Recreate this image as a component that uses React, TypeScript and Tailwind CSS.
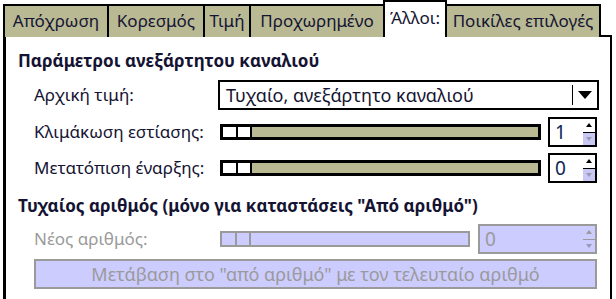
const tabs = [
  { label: "Απόχρωση", w: "w-[104px]" },
  { label: "Κορεσμός", w: "w-[96px]" },
  { label: "Τιμή", w: "w-[46px]" },
  { label: "Προχωρημένο", w: "w-[134px]" },
  { label: "Άλλοι:", w: "w-[64px]", active: true },
  { label: "Ποικίλες επιλογές", w: "w-[156px]", last: true },
];

const font = { fontFamily: '"Noto Sans", "DejaVu Sans", sans-serif' };

function Slider({ disabled, w }: { disabled?: boolean; w: string }) {
  const line = disabled ? "border-[#9a9a9a]" : "border-black";
  const bd = disabled ? "bg-[#9a9a9a]" : "bg-black";
  return (
    <div className={`flex h-[16px] ${w} ${disabled ? "border-2" : "border-[3px]"} ${line} ${disabled ? "bg-[#ccccff]" : "bg-[#b9b994]"}`}>
      <div className={`h-full w-[13px] ${disabled ? "bg-[#ccccff]" : "bg-white"}`} />
      <div className={`h-full w-[2px] ${bd}`} />
      <div className={`h-full w-[12px] ${disabled ? "bg-[#ccccff]" : "bg-white"}`} />
      <div className={`h-full w-[2px] ${bd}`} />
    </div>
  );
}

function Spin({ value, disabled, w }: { value: string; disabled?: boolean; w: string }) {
  return (
    <div
      className={`flex h-[30px] ${w} border-2 ${disabled ? "border-[#9a9a9a] bg-[#ccccff] text-[#9a9a9a]" : "border-black bg-white text-[#0b1f55]"}`}
    >
      <div className="flex flex-1 items-center pl-[5px] text-[19px] leading-none">{value}</div>
      <div className="flex w-[12px] flex-col">
        <div className="flex flex-1 items-center justify-center">
          <div
            className={`h-0 w-0 border-x-[3px] border-b-[4px] border-x-transparent ${disabled ? "border-b-[#9a9a9a]" : "border-b-black"}`}
          />
        </div>
        <div
          className={`flex flex-1 items-center justify-center border-t ${disabled ? "border-[#9a9a9a]" : "border-black bg-[#c8c8f2]"}`}
        >
          <div className="h-0 w-0 border-x-[3px] border-t-[4px] border-x-transparent border-t-[#9a9ab8]" />
        </div>
      </div>
    </div>
  );
}

export default function App() {
  return (
    <div className="h-[299px] w-[616px] overflow-hidden bg-white" style={font}>
      <div className="flex h-[37px] items-end pl-[3px]">
        {tabs.map((t) => (
          <div
            key={t.label}
            className={`flex items-center justify-center whitespace-nowrap border-l-2 border-t-2 border-black text-[17px] text-[#141432] ${t.w} ${
              t.active ? "relative z-10 h-[37px] border-r-2 bg-white" : "h-[33px] bg-[#b9b994]"
            } ${t.last ? "border-r-2" : ""} ${t.active ? "-mr-[2px] pb-[3px]" : "pb-[1px]"}`}
          >
            {t.label}
          </div>
        ))}
      </div>
      <div className="-mt-[2px] ml-[3px] h-[300px] w-[609px] border-2 border-l-[3px] border-black bg-white pl-[12px] pr-[10px] pt-[12px] text-[#141432]">
        <div className="flex h-[24px] items-center whitespace-nowrap text-[17px] font-bold">Παράμετροι ανεξάρτητου καναλιού</div>

        <div className="mt-[7px] flex h-[30px] items-center">
          <div className="w-[200px] whitespace-nowrap pl-[16px] text-[17px]">Αρχική τιμή:</div>
          <div className="flex h-[30px] w-[381px] items-center border-2 border-black bg-white">
            <div className="flex-1 whitespace-nowrap pl-[6px] text-[18px]">Τυχαίο, ανεξάρτητο καναλιού</div>
            <div className="h-[20px] w-px bg-black" />
            <div className="flex w-[24px] items-center justify-center">
              <div className="h-0 w-0 border-x-[7px] border-t-[8px] border-x-transparent border-t-black" />
            </div>
          </div>
        </div>

        <div className="mt-[7px] flex h-[30px] items-center">
          <div className="w-[202px] whitespace-nowrap pl-[16px] text-[17px]">Κλιμάκωση εστίασης:</div>
          <Slider w="w-[321px]" />
          <div className="ml-[7px]">
            <Spin value="1" w="w-[49px]" />
          </div>
        </div>

        <div className="mt-[6px] flex h-[30px] items-center">
          <div className="w-[202px] whitespace-nowrap pl-[16px] text-[17px]">Μετατόπιση έναρξης:</div>
          <Slider w="w-[321px]" />
          <div className="ml-[7px]">
            <Spin value="0" w="w-[49px]" />
          </div>
        </div>

        <div className="mt-[11px] flex h-[24px] items-center whitespace-nowrap text-[17px] font-bold">
          Τυχαίος αριθμός (μόνο για καταστάσεις "Από αριθμό")
        </div>

        <div className="mt-[6px] flex h-[30px] items-center">
          <div className="w-[202px] whitespace-nowrap pl-[16px] text-[17px] text-[#9a9a9a]">Νέος αριθμός:</div>
          <Slider disabled w="w-[250px]" />
          <div className="ml-[8px]">
            <Spin value="0" disabled w="w-[119px]" />
          </div>
        </div>

        <div className="ml-[16px] mt-[5px] flex h-[30px] w-[563px] items-center justify-center whitespace-nowrap border-2 border-[#9a9a9a] bg-[#ccccff] text-[18px] text-[#9a9a9a]">
          Μετάβαση στο "από αριθμό" με τον τελευταίο αριθμό
        </div>
      </div>
    </div>
  );
}
